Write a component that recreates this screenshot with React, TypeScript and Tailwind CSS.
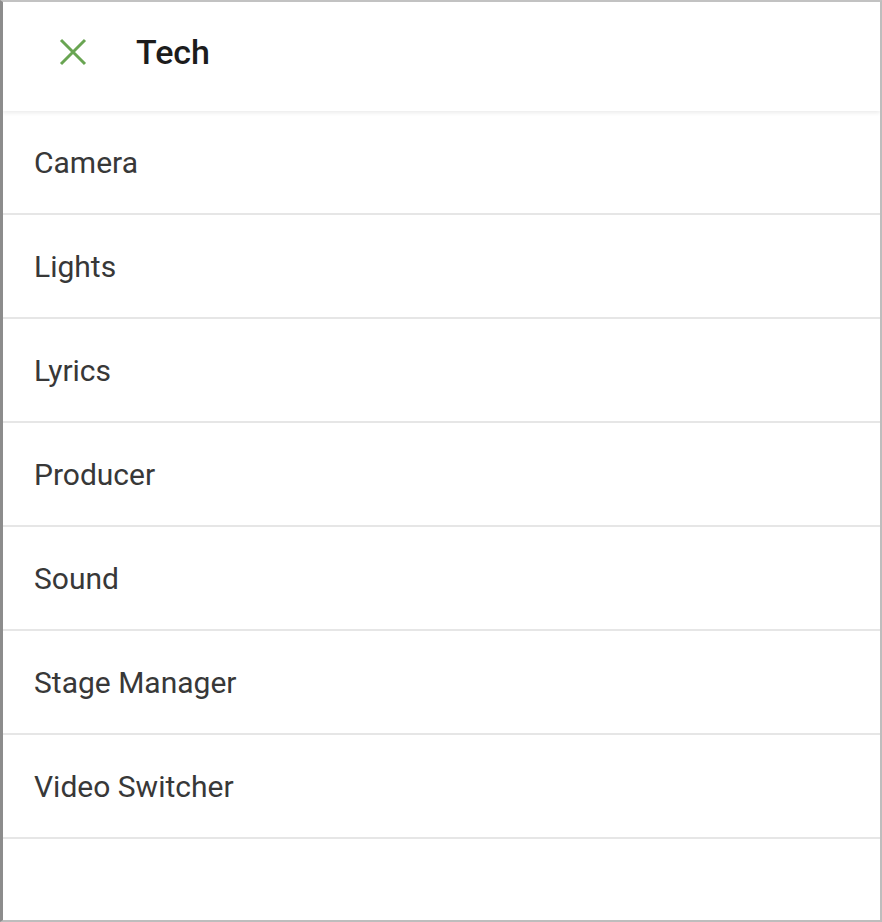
import React from "react";

const items = ["Camera", "Lights", "Lyrics", "Producer", "Sound", "Stage Manager", "Video Switcher"];

export default function App() {
  return (
    <div
      className="w-[882px] h-[922px] bg-white border-t-2 border-b-2 border-r-2 border-l-[3px] border-t-[#c2c2c2] border-b-[#bdbdbd] border-r-[#bdbdbd] border-l-[#8c8c8c] flex flex-col overflow-hidden"
      style={{ fontFamily: "Roboto, 'Noto Sans', Arial, sans-serif" }}
    >
      <div className="h-[109px] flex items-center pb-[10px] shrink-0 shadow-[0_2px_4px_rgba(0,0,0,0.08)] relative z-10">
        <div className="w-[56px] ml-[42px] flex items-center justify-center">
          <svg width="28" height="28" viewBox="0 0 28 28">
            <path d="M2 2 L26 26 M26 2 L2 26" stroke="#69a552" strokeWidth="3" strokeLinecap="butt" fill="none" />
          </svg>
        </div>
        <div className="ml-[35px] text-[34px] font-medium text-[#1c1c1c] leading-none">Tech</div>
      </div>
      <div className="flex flex-col">
        {items.map((t) => (
          <div key={t} className="h-[104px] flex items-center pl-[31px] pt-[2px] border-b-2 border-[#e6e6e6] text-[30px] text-[#383838] leading-none">
            {t}
          </div>
        ))}
      </div>
    </div>
  );
}
